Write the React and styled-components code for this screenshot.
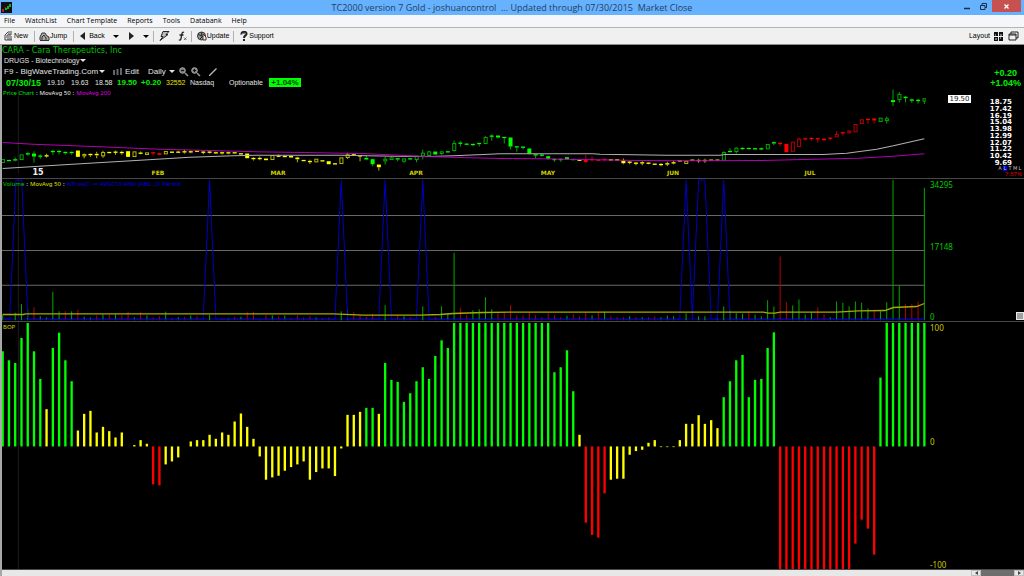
import React from "react";
import styled, { createGlobalStyle } from "styled-components";

const GlobalStyle = createGlobalStyle`
  * {
    box-sizing: border-box;
  }
  body {
    margin: 0;
    background: #000;
    font-family: "Liberation Sans", Arial, sans-serif;
  }
  button {
    margin: 0;
    padding: 0;
    border: 0;
    background: none;
    color: inherit;
    font: inherit;
    white-space: nowrap;
  }
`;

const colors = {
  g: "#00ff00",
  r: "#ff0000",
  y: "#ffff00",
};
const dim = {
  g: "#00a800",
  r: "#b80000",
  y: "#b8b800",
};

const Window = styled.div`
  display: flex;
  flex-direction: column;
  min-height: 100vh;
`;

const TitleBar = styled.header`
  display: grid;
  grid-template-columns: 1fr auto 1fr;
  align-items: center;
  height: 15px;
  background: #66b2ff;
  color: #23405f;
  font: 9px/15px "Open Sans", sans-serif;
  white-space: pre;
`;
const AppIcon = styled.svg`
  width: 11px;
  height: 11px;
  margin-left: 1px;
`;
const Title = styled.h1`
  margin: 0;
  font: inherit;
`;
const WindowButtons = styled.div`
  display: flex;
  justify-content: flex-end;
  align-self: start;
`;
const WindowButton = styled.button`
  display: flex;
  align-items: center;
  justify-content: center;
  width: ${(p) => (p.$close ? "32px" : "17px")};
  height: 12px;
  border-right: ${(p) => (p.$close ? "3px solid #66b2ff" : "0")};
  background: ${(p) => (p.$close ? "#c75050" : "transparent")};
  color: ${(p) => (p.$close ? "#fff" : "#1b2f45")};
`;

const MenuBar = styled.nav`
  display: flex;
  gap: 10px;
  height: 13px;
  padding-left: 4px;
  border-bottom: 1px solid #b4b4b4;
  background: #f5f6f9;
  color: #000;
  font: 7px/12px "Open Sans", sans-serif;
`;

const ToolBar = styled.div`
  display: flex;
  align-items: center;
  height: 17px;
  padding: 0 1px 0 4px;
  border-bottom: 1px solid #8c8c8c;
  background: #f0f0f0;
  color: #000;
  font-size: 7px;
  line-height: 10px;
`;
const ToolButton = styled.button`
  display: flex;
  align-items: center;
  gap: ${(p) => p.$gap || "0"};
  padding: 0 ${(p) => p.$pad || "4px"};
`;
const Separator = styled.span`
  width: 1px;
  height: 11px;
  background: #b0b0b0;
`;
const Spacer = styled.span`
  flex: ${(p) => (p.$width ? `0 0 ${p.$width}` : "1")};
`;

const Caret = styled.i`
  display: inline-block;
  border: 3px solid transparent;
  border-top-color: currentColor;
  border-bottom-width: 0;
`;

const Workspace = styled.main`
  flex: 1;
  display: flex;
  flex-direction: column;
  border-left: 2px solid #a8a8a8;
  background: #000;
`;
const Panel = styled.section`
  position: relative;
  display: grid;
  grid-template-columns: minmax(0, 1fr) 98px;
  flex: ${(p) => p.$grow} 1 0;
  min-height: 0;
  border-bottom: 1px solid #484848;
`;
const Plot = styled.div`
  position: relative;
  min-width: 0;
`;
const Drawing = styled.svg`
  position: absolute;
  inset: 0;
  width: 100%;
  height: 100%;
`;

const Info = styled.div`
  position: relative;
  color: #e4e4e4;
  font-size: 8px;
  white-space: nowrap;
`;
const Company = styled.h2`
  height: 10px;
  margin: 0;
  color: #00c000;
  font: 8px/12px "DejaVu Sans", sans-serif;
`;
const InfoRow = styled.div`
  display: flex;
  align-items: center;
  height: 11px;
  padding-left: 2px;
  font-size: ${(p) => (p.$small ? "7px" : "8px")};
`;
const InfoButton = styled.button`
  display: flex;
  align-items: center;
  gap: ${(p) => (p.$tight ? "1px" : "3px")};
  margin-right: ${(p) => p.$after || "0"};
`;
const Quote = styled.div`
  display: grid;
  grid-template-columns: 41px 24px 24px 22px 24px 25px 24px 39px 40px 32px;
  align-items: center;
  height: 11px;
  padding-left: 4px;
  font-size: 7px;
`;
const Value = styled.span`
  color: ${(p) => p.$color || "inherit"};
`;
const Strong = styled.strong`
  color: #00f000;
  font-size: ${(p) => (p.$large ? "9px" : "8px")};
`;
const Badge = styled.strong`
  height: 9px;
  background: #00ff00;
  color: #004400;
  font-size: 8px;
  line-height: 9px;
  text-align: center;
`;
const Legend = styled.div`
  position: relative;
  display: flex;
  gap: 2px;
  height: 9px;
  padding-left: 1px;
  color: #f0f0f0;
  font: 6px/10px "Noto Sans", sans-serif;
  white-space: nowrap;
`;

const TimeScale = styled.div`
  position: absolute;
  inset: auto 0 1px 0;
  height: 8px;
`;
const Month = styled.span`
  position: absolute;
  transform: translateX(-50%);
  color: ${(p) => (p.$year ? "#f0f0f0" : "#d0d000")};
  font: ${(p) => (p.$year ? "bold 8px" : "bold 6px")} / 8px "DejaVu Sans", sans-serif;
`;

const PriceAxis = styled.aside`
  display: flex;
  flex-direction: column;
  align-items: flex-end;
  padding: 23px 2px 0 0;
`;
const Change = styled.strong`
  padding-right: ${(p) => (p.$inset ? "5px" : "1px")};
  color: #00f000;
  font-size: 9px;
  line-height: 10px;
`;
const Scale = styled.div`
  display: grid;
  grid-template-columns: 1fr auto;
  width: 100%;
  margin-top: 7px;
  padding: 0 10px 0 22px;
`;
const LastPrice = styled.span`
  width: 23px;
  height: 8px;
  background: #fff;
  color: #222;
  font: 7px/8px "DejaVu Sans", sans-serif;
  text-align: center;
`;
const PriceList = styled.ol`
  display: flex;
  flex-direction: column;
  justify-content: space-between;
  height: 67px;
  margin: 4px 0 0;
  padding: 0;
  color: #fff;
  font: bold 7px/6px "DejaVu Sans", sans-serif;
  list-style: none;
  text-align: right;
`;
const ScaleModes = styled.div`
  display: flex;
  gap: 1px;
  color: #c0c0c0;
  font: 5px/5px "DejaVu Sans", sans-serif;
`;
const Mode = styled.button`
  width: 4px;
  background: ${(p) => (p.$on ? "#0000ff" : "transparent")};
`;
const Range = styled.span`
  color: #e00000;
  font: 6px/6px "Noto Sans", sans-serif;
`;

const Axis = styled.aside`
  display: flex;
  flex-direction: column;
  padding: 1px 0 0 4px;
  color: ${(p) => p.$color};
  font: 8px/9px "Noto Sans", sans-serif;
`;
const AxisHalf = styled.div`
  flex: 1;
  display: flex;
  flex-direction: column;
  justify-content: ${(p) => (p.$end ? "flex-end" : "space-between")};
`;
const ResizeBox = styled.button`
  position: absolute;
  right: 0;
  bottom: 1px;
  width: 8px;
  height: 8px;
  border: 1px solid #e8e8e8;
  background: #a0a0a0;
`;

const ScrollBar = styled.div`
  display: flex;
  height: 6px;
  background: #e8e8e8;
`;
const ScrollButton = styled.button`
  display: flex;
  align-items: center;
  justify-content: center;
  width: 10px;
  border: 1px solid #c0c0c0;
  color: #444;
`;
const Thumb = styled.div`
  width: 33px;
  background: #6e6e6e;
`;

// Plot units: three to a pixel at the normal window size.
const STEP = 18.81;
const barX = (i) => 8 + i * STEP;

// colour (capital = filled body), body top, body bottom, high, low
const candles = `g 208 217|G 211|G 209 209 202 213|g 194 208|G 191 191 186 197|G 190 199 183 217|G 198 198 192 206|Y 197 197 191 202
G 184 184 179 194|G 184 184 180 192|G 187 187 183 194|G 187 187 183 194|Y 181 200|y 193 197 190 204|Y 193 193 190 200|Y 193 193 185 204
y 187 197 182 203|Y 187|Y 186 186 181 194|Y 187 187 182 194|Y 183 200|y 185 199|Y 189 189 184 192|y 188 193|R 188 188 186 196|R 189 194
y 184 191|Y 184 188|Y 186 186 182 188|Y 185 185 179 190|Y 185 185 181 189|Y 181 185|Y 186 186 182 192|Y 186 186 182 190|Y 188 188 184 191
Y 188 188 184 193|Y 188 188 184 192|Y 188|Y 189 193|Y 190 204|Y 205 205 201 211|Y 205 205 199 210|Y 205 210|y 196 208|Y 198 198 193 200
Y 199 199 195 201|Y 197 202|Y 202 207 200 216|Y 209 213|Y 214 214 209 221|y 207 215|Y 210 214|Y 213 222|Y 221|y 203 220|y 194 202 188 206
Y 192 197|Y 195 199 195 213|G 203 208 195 209|G 207 222 205 228|Y 223 231 223 241|g 207 212 199 223|g 203 208 199 208|G 204 208 204 213
g 206 213 206 218|G 204 208|g 198 208 198 216|g 189 197 178 208|g 185 196 182 196|G 184 193|g 185 190 183 194|G 185|g 160 181 151 184
G 159 159 153 169|G 160 164|G 163 163 160 168|G 160 160 159 169|g 142 160 138 160|G 138 138 132 152|G 136 142 136 145|G 142 142 140 160
G 142 169 142 178|G 170 170 168 185|G 171 171 168 178|G 175 190 173 193|G 192 196 192 204|G 195 195 191 199|G 198 206 198 209
G 208 208 204 215|G 208 208 204 215|G 201 208|G 208|Y 210|R 208 215 194 219|R 208 208 198 214|R 210|R 208 208 204 213|Y 209|Y 207 211
Y 211 219 205 222|Y 216 216 212 222|Y 219 219 215 225|Y 218 218 213 225|Y 219 219 216 222|Y 220 224|Y 223 223 219 228|Y 221 221 215 227
Y 218 218 212 222|Y 212|y 213 220|Y 210|Y 211 211 206 218|Y 211 211 206 218|Y 208 212|Y 208 212|g 187 210 183 210|G 184 184 174 187
g 174 184 171 190|G 175 175 171 179|G 173 177|G 176|G 176 176 172 180|g 163 176|G 158 158 153 165|R 160 160 156 168|R 161 186|r 156 183
r 147 169 142 169|R 146 146 143 152|R 145 145 141 152|R 146 146 143 157|R 148 148 144 154|R 144 144 142 150|r 133 140 123 140
R 128 128 126 137|r 123 128 120 128|r 103 125|r 89 100|R 88 88 84 101|R 85 91 85 100|g 84 94|g 86 91 79 100|G 30 36 -2 48|g 13 28 6 37
G 22 22 18 37|G 30 30 25 38|G 31 31 27 40|g 26 33 26 42`
  .split(/[|\n]/)
  .map((row) => {
    const [kind, ...n] = row.split(" ");
    const [top, bottom = top, high = top, low = bottom] = n.map(Number);
    return { kind, top, bottom, high, low };
  });

const volume = `g416 - g410 g384 g399 r393 g420 g424 g347 g405 r405 g405 r401 g422 g424 r418 g415 r415 g414 r418 r407 g423 r408 g418 r423 r420 g407
r426 g423 r423 g418 r420 - g416 - r427 g427 r422 g422 r408 r407 g430 r417 g417 r420 g418 r426 r418 r424 r420 g424 r426 r424 - g405 g402
r408 r417 r422 r413 - g387 - r417 g420 r423 - g391 - r423 g390 g412 g230 r395 r417 g402 g399 g363 g399 r408 r410 r387 r418 r418 r408
r417 r423 r411 r417 r423 g419 r414 r420 r408 g417 r408 g407 r420 r423 r423 g420 r423 g423 r423 r420 g423 g418 g420 - g411 - g420 g420
- g422 g391 g403 g411 g413 r405 g416 g420 g372 g391 r241 r378 g388 g370 g415 g408 r393 r414 g423 g376 g380 g390 g376 g380 g397 r403 g405
g378 g12 g328 r384 r384 r376 g35`.split(/\s+/);

const bop = `g100 g127 g135 g60 g15 g100 g183 y274 g90 g44 g127 g190 y338 y288 y279 y344 y327 y340 y359 y344 - y382 y367 y378 r500 r503
y440 y431 y419 - y371 y367 y367 y351 y363 y344 y351 y311 y287 y327 y363 y416 y486 y479 y474 y459 y448 y440 y431 y486 y463 y452 y452
y475 y392 y291 y291 y282 g270 g270 y288 g135 g186 g192 g252 g226 g190 g148 g183 g114 g67 g90 g15 g15 g15 g15 g15 g15 g15 g15 g15 g15
g15 g15 g15 g15 g15 g15 g163 g148 g97 g220 y351 r615 r652 r660 r527 y486 y483 y483 y411 y400 y396 y375 y367 y388 y388 y388 y367 y318
y318 y292 y318 y307 y331 g238 g190 g127 g111 g238 g186 g183 g90 g43 r756 r756 r756 r756 r756 r756 r756 r756 r756 r756 r756 r756 r678
r606 r633 r711 g179 g15 g15 g15 g15 g15 g15 g15`.split(/\s+/);

const prices = ["18.75", "17.42", "16.19", "15.04", "13.98", "12.99", "12.07", "11.22", "10.42", "9.69"];

const months = [
  { name: "15", at: 38, year: true },
  { name: "FEB", at: 158 },
  { name: "MAR", at: 278 },
  { name: "APR", at: 416 },
  { name: "MAY", at: 548 },
  { name: "JUN", at: 673 },
  { name: "JUL", at: 810 },
];

const spikes = [[3, 6], [33], [54], [61], [67], [109], [111, 112], [115]];

function spikePath() {
  let d = "M8 429";
  spikes.forEach((s) => {
    const first = s[0] === 3 ? 48 : barX(s[0]);
    const last = s[0] === 3 ? 65 : barX(s[s.length - 1]);
    d += ` L${first - 19} 429 L${first} 12 L${last} 12 L${last + 19} 429`;
  });
  return d + " L2773 429";
}

function Cursor() {
  return <path d="M55 0 V760" stroke="#1c1c1c" strokeWidth="3" />;
}

function PriceDrawing() {
  return (
    <Drawing viewBox="6 -135 2772 399" preserveAspectRatio="none" aria-hidden="true">
      <path d="M55 0 V250" stroke="#1c1c1c" strokeWidth="3" />
      {candles.map((c, i) => {
        const key = c.kind.toLowerCase();
        const filled = c.kind !== key;
        const x = barX(i);
        const top = c.bottom - c.top < 4 ? c.top - 2 : c.top;
        const height = Math.max(4, c.bottom - c.top);
        return (
          <g key={i}>
            {c.high < top && <path d={`M${x} ${c.high} V${top}`} stroke={dim[key]} strokeWidth="3" />}
            {c.low > top + height && (
              <path d={`M${x} ${top + height} V${c.low}`} stroke={dim[key]} strokeWidth="3" />
            )}
            <rect
              x={filled ? x - 6 : x - 4}
              y={top}
              width={filled ? 12 : 9}
              height={height}
              fill={filled ? colors[key] : "none"}
              stroke={filled ? "none" : dim[key]}
              strokeWidth="3"
            />
          </g>
        );
      })}
      <polyline
        fill="none"
        stroke="#b0b0b0"
        strokeWidth="3"
        points="8,235 105,229 255,220 420,210 570,201 700,197 780,195 1020,195 1185,198 1290,199 1360,197 1450,193 1500,191 1780,191 1800,192 2000,195 2160,195 2175,193 2470,193 2540,189 2630,177 2680,167 2773,146"
      />
      <polyline
        fill="none"
        stroke="#b000b0"
        strokeWidth="3"
        points="8,157 100,162 300,170 480,177 600,180 740,184 960,188 1100,191 1200,195 1275,199 1380,202 1500,205 1620,206 1740,208 1920,211 2040,212 2280,211 2410,208 2575,204 2680,198 2773,191"
      />
    </Drawing>
  );
}

function VolumeDrawing() {
  return (
    <Drawing viewBox="6 9 2772 426" preserveAspectRatio="none" aria-hidden="true">
      <Cursor />
      <path d="M6 118.500 H2773 M6 223.500 H2773 M6 327 H2773" stroke="#686868" strokeWidth="3" />
      <path d="M8 429 H2773" stroke="#000060" strokeWidth="5" />
      {volume.map((v, i) =>
        v === "-" ? null : (
          <path key={i} d={`M${barX(i)} ${v.slice(1)} V432`} stroke={dim[v[0]]} strokeWidth="3" />
        )
      )}
      <path d={spikePath()} fill="none" stroke="#0000c0" strokeWidth="3" />
      <polyline
        fill="none"
        stroke="#a8a800"
        strokeWidth="4"
        points="8,415 70,415 76,413 600,413 1000,413 1090,417 1260,417 1320,415 1360,412 1450,409 1530,408 2290,408 2305,411 2325,411 2340,408 2510,408 2575,404 2655,403 2680,394 2750,391 2773,382"
      />
    </Drawing>
  );
}

function BopDrawing() {
  return (
    <Drawing viewBox="6 12 2772 741" preserveAspectRatio="none" aria-hidden="true">
      <Cursor />
      {bop.map((v, i) =>
        v === "-" ? null : (
          <path key={i} d={`M${barX(i)} 386 V${v.slice(1)}`} stroke={colors[v[0]]} strokeWidth="7" />
        )
      )}
    </Drawing>
  );
}

const menus = ["File", "WatchList", "Chart Template", "Reports", "Tools", "Databank", "Help"];

function Magnifier({ sign }) {
  return (
    <svg width="10" height="10" viewBox="0 0 10 10">
      <circle cx="3.500" cy="3.500" r="2.800" fill="#777" stroke="#aaa" />
      <path d={sign} stroke="#111" />
      <path d="M6 6l3 3" stroke="#999" strokeWidth="1.500" />
    </svg>
  );
}

export default function App() {
  return (
    <Window>
      <GlobalStyle />
      <TitleBar>
        <AppIcon viewBox="0 0 11 11">
          <path d="M0 0h11v11H0z" fill="#111" />
          <path d="M1 7h2v3H1zM4 5h1v2H4z" fill="#e01010" />
          <path d="M4 6h2V4h2V2h2v3H8v2H6v1H4z" fill="#10b020" />
        </AppIcon>
        <Title>{"TC2000 version 7 Gold - joshuancontrol  ... Updated through 07/30/2015  Market Close"}</Title>
        <WindowButtons>
          <WindowButton aria-label="Minimize">
            <svg width="6" height="8" viewBox="0 0 6 8">
              <path d="M0 6.500h6" stroke="currentColor" strokeWidth="1.500" />
            </svg>
          </WindowButton>
          <WindowButton aria-label="Restore">
            <svg width="7" height="7" viewBox="0 0 7 7">
              <path d="M.5 2.500h4.500v4H.5zM2 2V.5h4.500v4H5" fill="none" stroke="currentColor" />
            </svg>
          </WindowButton>
          <WindowButton $close aria-label="Close">
            <svg width="5" height="5" viewBox="0 0 5 5">
              <path d="M.5.5l4 4M4.500.5l-4 4" stroke="currentColor" strokeWidth="1.300" />
            </svg>
          </WindowButton>
        </WindowButtons>
      </TitleBar>

      <MenuBar>
        {menus.map((m) => (
          <button key={m}>{m}</button>
        ))}
      </MenuBar>

      <ToolBar>
        <ToolButton $pad="0">
          <svg width="10" height="10" viewBox="0 0 10 10">
            <path d="M1 9V4l3-3h4M1 9h7M3 7V4h4M4 6h4M4 3h4M3 8h5" fill="none" stroke="#444" />
          </svg>
          New
        </ToolButton>
        <Spacer $width="6px" />
        <Separator />
        <ToolButton>
          <svg width="11" height="10" viewBox="0 0 11 10">
            <path d="M1 9V6l2-4h3l2 3 2 1v3M3 9V6l2-2 2 3v2M1 9.500h9" fill="#aaa" stroke="#333" />
          </svg>
          Jump
        </ToolButton>
        <Spacer $width="2px" />
        <Separator />
        <ToolButton $pad="6px" $gap="4px">
          <svg width="5" height="8" viewBox="0 0 5 8">
            <path d="M5 0v8L0 4z" fill="#222" />
          </svg>
          Back
          <Spacer />
          <Caret />
        </ToolButton>
        <ToolButton $gap="9px" aria-label="Forward">
          <svg width="5" height="8" viewBox="0 0 5 8">
            <path d="M0 0v8l5-4z" fill="#222" />
          </svg>
          <Caret />
        </ToolButton>
        <Separator />
        <ToolButton $pad="5px" aria-label="Flash scan">
          <svg width="11" height="10" viewBox="0 0 11 10">
            <path d="M4 .5h6L7 3.500h2L1 9.500l3-4H2z" fill="#bbb" stroke="#222" />
          </svg>
        </ToolButton>
        <ToolButton $pad="3px" aria-label="Formula">
          <svg width="10" height="10" viewBox="0 0 10 10">
            <path d="M6 1.500C4.500.5 4 2 3.700 4L3 7.500C2.700 9 2 9.500.8 8.800M1.500 4h4" fill="none" stroke="#222" strokeWidth="1.300" />
            <path d="M6 6.500l2.500 2.500M8.500 6.500l-2.500 2.500" stroke="#555" strokeWidth=".8" />
          </svg>
        </ToolButton>
        <Separator />
        <ToolButton>
          <svg width="11" height="10" viewBox="0 0 11 10">
            <circle cx="5.500" cy="5" r="4" fill="#999" stroke="#333" />
            <path d="M2 3l3 2 1-4M5 5l4 1M4 8l2-2" fill="none" stroke="#222" />
            <path d="M7 3l3 3v3H7z" fill="#eee" stroke="#333" />
          </svg>
          Update
        </ToolButton>
        <Separator />
        <ToolButton $pad="6px" $gap="1px">
          <svg width="8" height="10" viewBox="0 0 8 10">
            <path d="M1.500 3.500C1 0 7 0 6.500 3 6.300 4.500 4 4.500 4 7M4 8v2" fill="none" stroke="#222" strokeWidth="2" />
            <path d="M2.500 2.500h3" stroke="#888" />
          </svg>
          Support
        </ToolButton>
        <Spacer />
        <ToolButton $gap="4px" $pad="1px">
          Layout
          <svg width="9" height="9" viewBox="0 0 9 9">
            <path d="M0 0h4v4H0zM5 0h4v4H5zM0 5h4v4H0zM5 5h4v4H5z" fill="#111" />
            <path d="M1 3h1M6 3h2M1 7h2M6 6h1" stroke="#ddd" />
          </svg>
        </ToolButton>
        <ToolButton aria-label="Windows">
          <svg width="11" height="10" viewBox="0 0 11 10">
            <path d="M3 3V1h7v6H8M1 3h7v6H1zM1 4h7" fill="none" stroke="#222" />
          </svg>
        </ToolButton>
      </ToolBar>

      <Workspace>
        <Panel $grow={134}>
          <Plot>
            <PriceDrawing />
            <Info>
              <Company>CARA - Cara Therapeutics, Inc</Company>
              <InfoRow $small>
                <InfoButton $tight>
                  DRUGS - Biotechnology <Caret />
                </InfoButton>
              </InfoRow>
              <InfoRow>
                <InfoButton $tight $after="8px">
                  F9 - BigWaveTrading.Com <Caret />
                </InfoButton>
                <InfoButton $after="9px">
                  <svg width="9" height="7" viewBox="0 0 9 7">
                    <path d="M1 2v5M4.500 1v6M8 0v7" stroke="#666" strokeWidth="2" />
                  </svg>
                  Edit
                </InfoButton>
                <InfoButton $after="4px">
                  Daily <Caret />
                </InfoButton>
                <InfoButton $after="2px" aria-label="Zoom out">
                  <Magnifier sign="M2 3.500h3" />
                </InfoButton>
                <InfoButton $after="8px" aria-label="Zoom in">
                  <Magnifier sign="M2 3.500h3M3.500 2v3" />
                </InfoButton>
                <InfoButton aria-label="Draw">
                  <svg width="8" height="8" viewBox="0 0 8 8">
                    <path d="M0 8L7.500 .5" stroke="#bbb" strokeWidth="1.300" />
                  </svg>
                </InfoButton>
              </InfoRow>
              <Quote>
                <Strong $large>07/30/15</Strong>
                <Value>19.10</Value>
                <Value>19.63</Value>
                <Value>18.58</Value>
                <Strong>19.50</Strong>
                <Strong>+0.20</Strong>
                <Value $color="#e0e000">32552</Value>
                <Value>Nasdaq</Value>
                <Value>Optionable</Value>
                <Badge>+1.04%</Badge>
              </Quote>
              <Legend>
                <Value $color="#00e000">Price Chart</Value>:<Value>MovAvg 50</Value>:
                <Value $color="#e000e0">MovAvg 200</Value>
              </Legend>
            </Info>
            <TimeScale>
              {months.map((m) => (
                <Month key={m.name} $year={m.year} style={{ left: `${((m.at - 2) / 924) * 100}%` }}>
                  {m.name}
                </Month>
              ))}
            </TimeScale>
          </Plot>
          <PriceAxis>
            <Change $inset>+0.20</Change>
            <Change>+1.04%</Change>
            <Scale>
              <LastPrice>19.50</LastPrice>
              <PriceList>
                {prices.map((p) => (
                  <li key={p}>{p}</li>
                ))}
              </PriceList>
            </Scale>
            <ScaleModes>
              <Mode>A</Mode>
              <Mode $on>L</Mode>
              <Mode>T</Mode>
              <Mode>M</Mode>
              <Mode>L</Mode>
            </ScaleModes>
            <Range>7.57%</Range>
          </PriceAxis>
        </Panel>

        <Panel $grow={143}>
          <Plot>
            <VolumeDrawing />
            <Legend>
              <Value $color="#00c800">Volume</Value>:<Value $color="#e0e000">MovAvg 50</Value>:
              <Value $color="#0000e0">{"%True(C >= AVGC10 AND (ABS...)1 Period"}</Value>
            </Legend>
          </Plot>
          <Axis $color="#00c800">
            <AxisHalf>
              <span>34295</span>
              <span>17148</span>
            </AxisHalf>
            <AxisHalf $end>
              <span>0</span>
            </AxisHalf>
          </Axis>
          <ResizeBox aria-label="Resize panel" />
        </Panel>

        <Panel $grow={248}>
          <Plot>
            <BopDrawing />
            <Legend>
              <Value $color="#d0d000">BOP</Value>
            </Legend>
          </Plot>
          <Axis $color="#c8c800">
            <AxisHalf>
              <span>100</span>
              <span>0</span>
            </AxisHalf>
            <AxisHalf $end>
              <span>-100</span>
            </AxisHalf>
          </Axis>
        </Panel>

        <ScrollBar>
          <Spacer />
          <ScrollButton aria-label="Scroll left">
            <svg width="3" height="4" viewBox="0 0 3 4">
              <path d="M3 0v4L0 2z" fill="currentColor" />
            </svg>
          </ScrollButton>
          <Thumb />
          <ScrollButton aria-label="Scroll right">
            <svg width="3" height="4" viewBox="0 0 3 4">
              <path d="M0 0v4l3-2z" fill="currentColor" />
            </svg>
          </ScrollButton>
        </ScrollBar>
      </Workspace>
    </Window>
  );
}
